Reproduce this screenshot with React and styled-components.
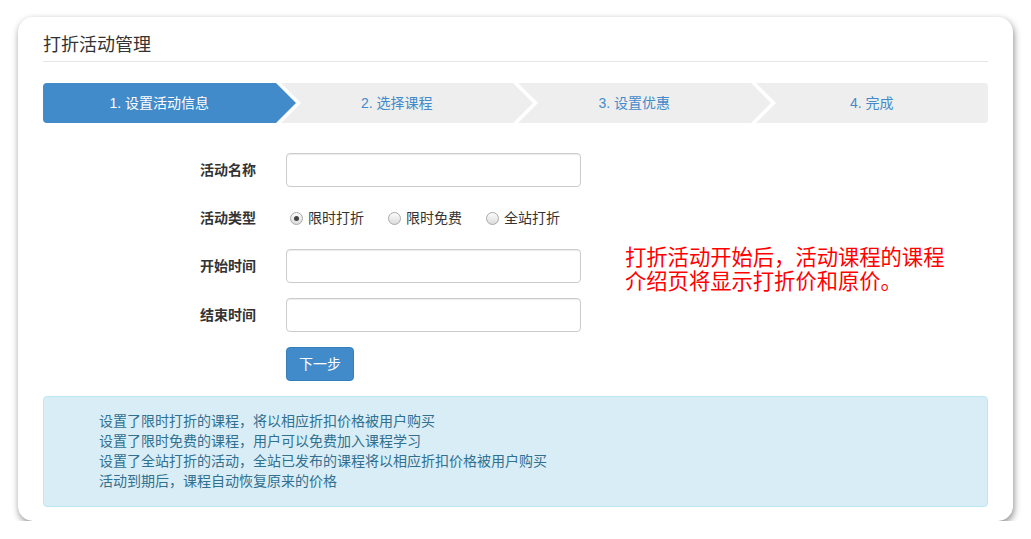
import React, { useState } from 'react';
import styled, { createGlobalStyle } from 'styled-components';

const steps = ['1. 设置活动信息', '2. 选择课程', '3. 设置优惠', '4. 完成'];
const types = ['限时打折', '限时免费', '全站打折'];
const tips = [
  '设置了限时打折的课程，将以相应折扣价格被用户购买',
  '设置了限时免费的课程，用户可以免费加入课程学习',
  '设置了全站打折的活动，全站已发布的课程将以相应折扣价格被用户购买',
  '活动到期后，课程自动恢复原来的价格',
];

export default function App() {
  const [type, setType] = useState(0);

  return (
    <Page>
      <GlobalStyle />
      <Card>
        <Title>打折活动管理</Title>
        <StepList>
          {steps.map((text, i) => (
            <Step key={text} $active={i === 0} $last={i === steps.length - 1}>
              {text}
            </Step>
          ))}
        </StepList>
        <FormArea>
          <Form>
            <FormGroup>
              <Label>活动名称</Label>
              <Input type="text" />
            </FormGroup>
            <FormGroup $short>
              <Label>活动类型</Label>
              <RadioGroup>
                {types.map((t, i) => (
                  <RadioItem key={t} onClick={() => setType(i)}>
                    <RadioDot $checked={type === i} />
                    {t}
                  </RadioItem>
                ))}
              </RadioGroup>
            </FormGroup>
            <FormGroup>
              <Label>开始时间</Label>
              <Input type="text" />
            </FormGroup>
            <FormGroup>
              <Label>结束时间</Label>
              <Input type="text" />
            </FormGroup>
            <ButtonRow>
              <PrimaryButton type="button">下一步</PrimaryButton>
            </ButtonRow>
          </Form>
          <Note>
            打折活动开始后，活动课程的课程
            <br />
            介绍页将显示打折价和原价。
          </Note>
        </FormArea>
        <Alert>
          <ul>
            {tips.map(t => (
              <li key={t}>{t}</li>
            ))}
          </ul>
        </Alert>
      </Card>
    </Page>
  );
}

const GlobalStyle = createGlobalStyle`
  * {
    box-sizing: border-box;
  }

  body {
    margin: 0;
    background: #fff;
    color: #333;
    font-family: "Liberation Sans", "Noto Sans CJK SC", sans-serif;
    line-height: 20px;
  }
`;

const Page = styled.div`
  padding: 17px 0 0 18px;
`;

const Card = styled.div`
  width: 995px;
  padding: 15px 25px 14px;
  border-radius: 15px;
  background: #fff;
  box-shadow: 1px 3px 7px rgba(0, 0, 0, 0.45);
`;

const Title = styled.h2`
  margin: 0;
  padding-bottom: 3px;
  border-bottom: 1px solid #e5e5e5;
  font-size: 18px;
  font-weight: normal;
  line-height: 26px;
  color: #333;
`;

const StepList = styled.ul`
  display: flex;
  gap: 5px;
  margin: 21px 0 0;
  padding: 0;
  list-style: none;
`;

const Step = styled.li`
  position: relative;
  display: flex;
  flex: 1;
  justify-content: center;
  align-items: center;
  height: 40px;
  font-size: 14px;
  background: ${({ $active }) => ($active ? '#428bca' : '#eeeeee')};
  color: ${({ $active }) => ($active ? '#fff' : '#428bca')};

  &:first-child {
    border-radius: 4px 0 0 4px;
  }

  &:last-child {
    border-radius: 0 4px 4px 0;
  }

  ${({ $last, $active }) =>
    !$last &&
    `
    &::before,
    &::after {
      content: '';
      position: absolute;
      top: 0;
      width: 0;
      height: 0;
      border-top: 20px solid transparent;
      border-bottom: 20px solid transparent;
    }

    &::before {
      left: calc(100% + 5px);
      z-index: 1;
      border-left: 20px solid #fff;
    }

    &::after {
      left: 100%;
      z-index: 2;
      border-left: 20px solid ${$active ? '#428bca' : '#eeeeee'};
    }
  `}
`;

const FormArea = styled.div`
  display: flex;
  margin-top: 30px;
`;

const Form = styled.form`
  width: 538px;
  flex-shrink: 0;
`;

const FormGroup = styled.div`
  display: flex;
  align-items: center;
  height: ${({ $short }) => ($short ? '32px' : '34px')};
  margin-bottom: 15px;
`;

const Label = styled.label`
  flex-shrink: 0;
  width: 213px;
  margin-right: 30px;
  text-align: right;
  font-size: 14px;
  font-weight: bold;
  line-height: 20px;
  color: #333;
`;

const Input = styled.input`
  width: 295px;
  height: 34px;
  padding: 6px 12px;
  border: 1px solid #ccc;
  border-radius: 4px;
  box-shadow: inset 0 1px 1px rgba(0, 0, 0, 0.075);
  font-size: 14px;
  outline: none;
`;

const RadioGroup = styled.div`
  display: flex;
  padding-left: 4px;
  white-space: nowrap;
`;

const RadioItem = styled.span`
  display: inline-flex;
  flex-shrink: 0;
  align-items: center;
  gap: 5px;
  margin-right: 24px;
  font-size: 14px;
  line-height: 20px;
  color: #333;
  cursor: pointer;

  &:last-child {
    margin-right: 0;
  }
`;

const RadioDot = styled.span`
  position: relative;
  flex-shrink: 0;
  width: 13px;
  height: 13px;
  border: 1px solid #a9a9a9;
  border-radius: 50%;
  background: linear-gradient(#fcfcfc, #dcdcdc);

  &::after {
    content: '';
    display: ${({ $checked }) => ($checked ? 'block' : 'none')};
    position: absolute;
    top: 3px;
    left: 3px;
    width: 5px;
    height: 5px;
    border-radius: 50%;
    background: #444;
  }
`;

const ButtonRow = styled.div`
  padding-left: 243px;
`;

const PrimaryButton = styled.button`
  height: 34px;
  padding: 6px 12px;
  border: 1px solid #357ebd;
  border-radius: 4px;
  background: #428bca;
  color: #fff;
  font-family: inherit;
  font-size: 14px;
  line-height: 20px;
`;

const Note = styled.p`
  margin: 0 0 0 44px;
  padding-top: 93px;
  font-size: 21.3px;
  line-height: 24px;
  color: #ff0000;
  white-space: nowrap;
`;

const Alert = styled.div`
  margin-top: 15px;
  padding: 14px 15px 15px;
  border: 1px solid #bce8f1;
  border-radius: 4px;
  background: #d9edf7;
  color: #31708f;

  ul {
    margin: 0;
    padding-left: 40px;
    list-style: none;
  }

  li {
    font-size: 14px;
    line-height: 20px;
  }
`;
